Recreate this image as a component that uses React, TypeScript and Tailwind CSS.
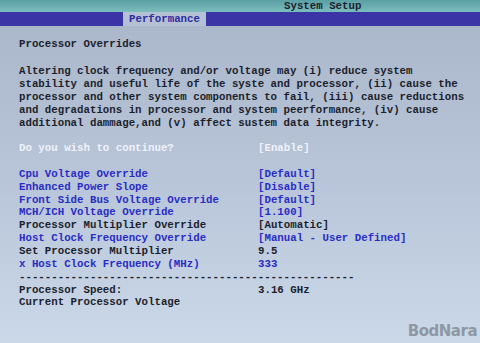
const mono = "font-['Liberation_Mono','DejaVu_Sans_Mono',monospace]";

const intro = [
  'Altering clock frequency and/or voltage may (i) reduce system',
  'stability and useful life of the syste and processor, (ii) cause the',
  'processor and other system components to fail, (iii) cause reductions',
  'and degradations in processor and system peerformance, (iv) cause',
  'additional dammage,and (v) affect sustem data integrity.',
];

type Row = { label: string; value: string; tone: 'blue' | 'dark' };

const rows: Row[] = [
  { label: 'Cpu Voltage Override', value: '[Default]', tone: 'blue' },
  { label: 'Enhanced Power Slope', value: '[Disable]', tone: 'blue' },
  { label: 'Front Side Bus Voltage Override', value: '[Default]', tone: 'blue' },
  { label: 'MCH/ICH Voltage Override', value: '[1.100]', tone: 'blue' },
  { label: 'Processor Multiplier Override', value: '[Automatic]', tone: 'dark' },
  { label: 'Host Clock Frequency Override', value: '[Manual - User Defined]', tone: 'blue' },
  { label: 'Set Processor Multiplier', value: '9.5', tone: 'dark' },
  { label: 'x Host Clock Frequency (MHz)', value: '333', tone: 'blue' },
];

function Line({ label, value, className }: { label: string; value?: string; className: string }) {
  return (
    <div className={`flex h-[12.85px] items-center whitespace-pre ${className}`}>
      <span className="w-[239px] shrink-0">{label}</span>
      {value && <span>{value}</span>}
    </div>
  );
}

export default function App() {
  return (
    <div className={`relative flex h-[343px] w-[480px] flex-col overflow-hidden ${mono} text-[10.75px] font-bold`}>
      <div className="flex h-[12px] shrink-0 items-center bg-linear-to-b from-[#5a9fa3] to-[#7cbcbd] pl-[284px] text-[#1c2230]">
        System Setup
      </div>
      <div className="flex h-[14px] shrink-0 bg-[#3a34a6]">
        <div className="ml-[123px] flex w-[83px] items-center justify-center bg-[#b4c0d4] text-[#2d2ba0]">
          Performance
        </div>
      </div>

      <div className="flex flex-1 flex-col bg-linear-to-b from-[#abb7cb] via-[#b9c6da] to-[#cbd8e8] pl-[19px] pt-[12px] text-[#1b1f2c]">
        <div className="flex h-[12.85px] items-center">Processor Overrides</div>

        <div className="mt-[14px] flex flex-col">
          {intro.map(l => (
            <div key={l} className="flex h-[12.85px] items-center whitespace-pre">{l}</div>
          ))}
        </div>

        <div className="mt-[12.85px]">
          <Line label="Do you wish to continue?" value="[Enable]" className="text-[#eef2fb]" />
        </div>

        <div className="mt-[12.85px] flex flex-col">
          {rows.map(r => (
            <Line
              key={r.label}
              label={r.label}
              value={r.value}
              className={r.tone === 'blue' ? 'text-[#2a2cc4]' : 'text-[#1b1f2c]'}
            />
          ))}
          <div className="flex h-[12.85px] items-center whitespace-pre">{'-'.repeat(52)}</div>
          <Line label="Processor Speed:" value="3.16 GHz" className="text-[#1b1f2c]" />
          <Line label="Current Processor Voltage" className="text-[#1b1f2c]" />
        </div>
      </div>

      <div className="absolute bottom-[1px] right-[3px] font-['DejaVu_Sans',sans-serif] text-[15px] font-bold tracking-[-0.5px] text-[#8e97a3]">
        BodNara
      </div>
    </div>
  );
}
